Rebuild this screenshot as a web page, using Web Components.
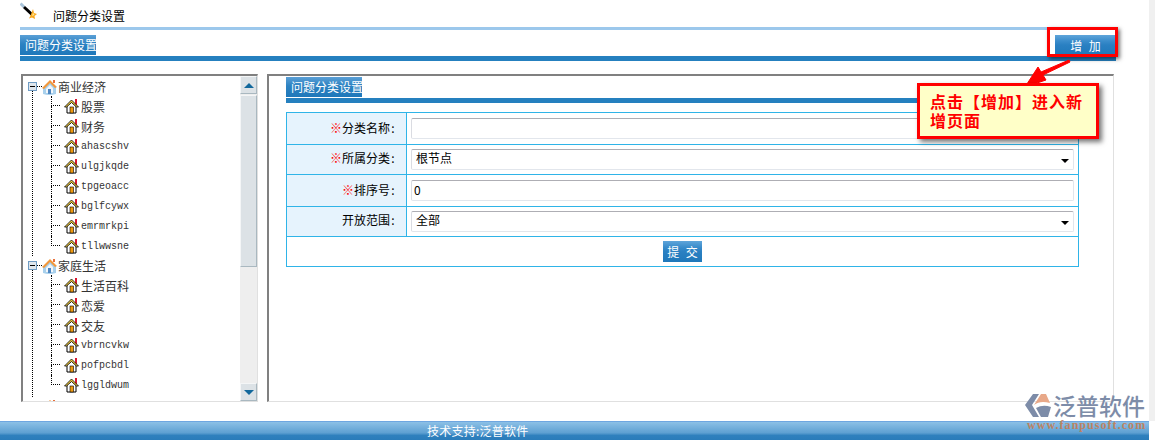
<!DOCTYPE html>
<html lang="zh">
<head>
<meta charset="utf-8">
<title>问题分类设置</title>
<style>
    html, body { margin: 0; height: 440px; overflow: hidden; background: #fff; }
    body { font: 12px "Noto Sans CJK SC", sans-serif; color: #000; }
</style>
</head>
<body>
<app-page>
    <top-title slot="top">问题分类设置</top-title>
    <section-head slot="top" title="问题分类设置" line="top"><blue-button label="增 加" wide></blue-button></section-head>

    <tree-panel slot="left">
        <tree-root label="商业经济">
            <tree-leaf>股票</tree-leaf>
            <tree-leaf>财务</tree-leaf>
            <tree-leaf latin>ahascshv</tree-leaf>
            <tree-leaf latin>ulgjkqde</tree-leaf>
            <tree-leaf latin>tpgeoacc</tree-leaf>
            <tree-leaf latin>bglfcywx</tree-leaf>
            <tree-leaf latin>emrmrkpi</tree-leaf>
            <tree-leaf latin>tllwwsne</tree-leaf>
        </tree-root>
        <tree-root label="家庭生活" style="--kids-end: 2px">
            <tree-leaf>生活百科</tree-leaf>
            <tree-leaf>恋爱</tree-leaf>
            <tree-leaf>交友</tree-leaf>
            <tree-leaf latin>vbrncvkw</tree-leaf>
            <tree-leaf latin>pofpcbdl</tree-leaf>
            <tree-leaf latin>lggldwum</tree-leaf>
        </tree-root>
        <tree-root label="休闲娱乐"></tree-root>
    </tree-panel>

    <form-panel slot="right">
        <section-head title="问题分类设置"></section-head>
        <form-table>
            <form-row label="分类名称" required height="31"></form-row>
            <form-row label="所属分类" required select height="29">根节点</form-row>
            <form-row label="排序号" required height="31">0</form-row>
            <form-row label="开放范围" select height="29">全部</form-row>
            <submit-row><blue-button label="提 交"></blue-button></submit-row>
        </form-table>
    </form-panel>

    <site-footer slot="bottom">技术支持:泛普软件</site-footer>
    <note-callout slot="over">点击【增加】进入新增页面</note-callout>
    <site-logo slot="over"></site-logo>
</app-page>

<script>
class AppPage extends HTMLElement{
    constructor() {
        super();
        this.attachShadow({mode: "open"});
    }
    connectedCallback(){
        this.shadowRoot.innerHTML = `
        <style>
            :host { display: flex; position: relative; width: 1155px; height: 440px; overflow: hidden; }
            .col { width: 1149px; display: flex; flex-direction: column; }
            .gutter { flex: 1; height: 421px; background: #f0f0f0; }
            .top { padding: 0 33px 0 20px; display: block; }
            .main { display: flex; gap: 9px; margin: 13px 0 0 21px; height: 328px; width: 1093px; }
            .spacer { flex: 1; }
        </style>
        <div class="col">
            <div class="top"><slot name="top"></slot></div>
            <div class="main"><slot name="left"></slot><slot name="right"></slot></div>
            <div class="spacer"></div>
            <slot name="bottom"></slot>
        </div>
        <div class="gutter"></div>
        <slot name="over"></slot>
        `;
    }
}

class TopTitle extends HTMLElement{
    constructor() {
        super();
        this.attachShadow({mode: "open"});
    }
    connectedCallback(){
        this.shadowRoot.innerHTML = `
        <style>
            :host { display: block; height: 30px; box-sizing: border-box; border-bottom: 3px solid #9cc8ec; }
            .row { display: flex; align-items: center; height: 27px; }
            svg { width: 17px; height: 17px; margin: -6px 16px 0 0; }
            span { font-size: 12px; padding-top: 5px; line-height: 22px; }
        </style>
        <div class="row">
            <svg viewBox="0 0 17 17">
                <path d="M0.5 1.5 L4 5" stroke="#a9c4da" stroke-width="3"/>
                <path d="M4 5 L12 12.5" stroke="#000" stroke-width="3"/>
                <path d="M13 7 L14 11 L17 12 L14.5 14 L15 17 L12 15.5 L9 16.5 L10.5 13.5 Z" fill="#f8a820"/>
                <path d="M13 10.5 L14.5 13 L12 14 Z" fill="#ffe890"/>
            </svg>
            <span><slot></slot></span>
        </div>
        `;
    }
}

class SectionHead extends HTMLElement{
    constructor() {
        super();
        this.attachShadow({mode: "open"});
    }
    connectedCallback(){
        this.shadowRoot.innerHTML = `
        <style>
            :host { display: block; }
            :host([line]) { margin-top: 5px; }
            .row { display: flex; justify-content: space-between; height: 20px; margin-bottom: 1px; }
            .tab {
                background: linear-gradient(#5a9fd6 0, #2c82c2 45%, #1f78ba 100%);
                color: #fff; font-size: 12px; line-height: 20px; padding-left: 5px; width: 71px; white-space: nowrap;
            }
            .bar { height: 5px; background: #2580bf; }
        </style>
        <div class="row"><div class="tab">${this.getAttribute("title")}</div><slot></slot></div>
        <div class="bar"></div>
        `;
    }
}

class BlueButton extends HTMLElement{
    constructor() {
        super();
        this.attachShadow({mode: "open"});
    }
    connectedCallback(){
        this.shadowRoot.innerHTML = `
        <style>
            :host { display: block; width: 39px; height: 21px; }
            :host([wide]) { width: 61px; height: 20px; }
            div {
                height: 100%; color: #fff; font-size: 12px; word-spacing: 4px; text-align: center;
                display: flex; align-items: center; justify-content: center;
                background: linear-gradient(#5fa5da 0, #3a8ccb 30%, #2a80c2 50%, #1f78ba 100%);
            }
        </style>
        <div>${this.getAttribute("label")}</div>
        `;
    }
}

class TreePanel extends HTMLElement{
    constructor() {
        super();
        this.attachShadow({mode: "open"});
    }
    connectedCallback(){
        this.shadowRoot.innerHTML = `
        <style>
            :host {
                display: flex; width: 237px; height: 328px; box-sizing: border-box;
                border-top: 2px solid #808080; border-left: 2px solid #808080;
                border-right: 1px solid #e0e0e0; border-bottom: 1px solid #e0e0e0;
            }
            .list { flex: 1; overflow: hidden; padding: 1px 0 0 5px; }
            .bar { width: 17px; display: flex; flex-direction: column; background: #eeeeee; }
            .btn, .thumb { box-sizing: border-box; background: #dce2e6; border: 1px solid #a9b8c0; border-top-color: #f4f6f7; border-left-color: #f4f6f7; }
            .btn { height: 18px; display: flex; align-items: center; justify-content: center; }
            .thumb { height: 172px; margin-top: 1px; }
            .track { flex: 1; }
            i { width: 0; height: 0; border-left: 5px solid transparent; border-right: 5px solid transparent; }
            .up { border-bottom: 5px solid #12689c; }
            .down { border-top: 5px solid #12689c; }
        </style>
        <div class="list"><slot></slot></div>
        <div class="bar">
            <div class="btn"><i class="up"></i></div>
            <div class="thumb"></div>
            <div class="track"></div>
            <div class="btn"><i class="down"></i></div>
        </div>
        `;
    }
}

class TreeRoot extends HTMLElement{
    constructor() {
        super();
        this.attachShadow({mode: "open"});
    }
    connectedCallback(){
        this.shadowRoot.innerHTML = `
        <style>
            :host { display: block; }
            .row { display: flex; align-items: center; height: 19px; color: #333; font-size: 12px; }
            .box {
                box-sizing: border-box; width: 9px; height: 9px; border: 1px solid #6f9cc4; background: #dfe6ec;
                display: flex; align-items: center; justify-content: center;
            }
            .box b { width: 5px; height: 1px; background: #000; }
            .dash { width: 5px; border-top: 1px dotted #000; }
            svg { width: 15px; height: 16px; margin-right: 1px; }
            .kids {
                margin: -5px 0 0 4px; padding: 5px 0 var(--kids-end, 0) 18px;
                border-left: 1px dotted #000;
            }
        </style>
        <div class="row">
            <span class="box"><b></b></span><span class="dash"></span>
            <svg viewBox="0 0 15 16">
                <path d="M1 9 L1 15 Q7 17 14 15 L14 8 L8 3 Z" fill="#a8d0ec"/>
                <path d="M4 10 L4 14 L11 14 L11 9 L8 6 Z" fill="#f2f6fa"/>
                <rect x="6" y="10" width="3" height="5" fill="#4f86c0"/>
                <path d="M0 9 L8 1 L15 8 L13 9 L8 4 L2 10 Z" fill="#f2983c"/>
                <rect x="11" y="1" width="2" height="3" fill="#e8703c"/>
            </svg>
            <span>${this.getAttribute("label")}</span>
        </div>
        <div class="kids"><slot></slot></div>
        `;
    }
}

class TreeLeaf extends HTMLElement{
    constructor() {
        super();
        this.attachShadow({mode: "open"});
    }
    connectedCallback(){
        this.shadowRoot.innerHTML = `
        <style>
            :host { display: flex; align-items: center; height: 20px; color: #333; font-size: 12px; white-space: nowrap; }
            :host([latin]) { font-family: "Liberation Mono", monospace; font-size: 10px; }
            .line { width: 9px; height: 20px; margin-right: 4px; }
            .line i, .line b { display: block; box-sizing: border-box; height: 10px; border-left: 1px dotted #000; }
            .line i { border-bottom: 1px dotted #000; }
            :host(:last-child) .line b { border-left: 0; }
            svg { width: 15px; height: 15px; margin-right: 2px; }
        </style>
        <span class="line"><i></i><b></b></span>
        <svg viewBox="0 0 15 15">
            <rect x="11" y="0" width="2" height="6" fill="#d81830"/>
            <path d="M3 7 L3 14 L12 14 L12 7 L7.5 3 Z" fill="#fff" stroke="#000"/>
            <path d="M0.5 8 L7.5 1 L14.5 8 L12.5 8 L7.5 3.5 L2.5 8 Z" fill="#f6d040" stroke="#000" stroke-width="0.8"/>
            <rect x="6" y="8" width="3.5" height="6" fill="#f09a10" stroke="#000" stroke-width="0.6"/>
        </svg>
        <slot></slot>
        `;
    }
}

class FormPanel extends HTMLElement{
    constructor() {
        super();
        this.attachShadow({mode: "open"});
    }
    connectedCallback(){
        this.shadowRoot.innerHTML = `
        <style>
            :host {
                display: block; width: 847px; height: 328px; box-sizing: border-box;
                border-top: 2px solid #808080; border-left: 2px solid #808080;
                border-right: 1px solid #e0e0e0; border-bottom: 1px solid #e0e0e0;
                padding: 1px 34px 0 17px;
            }
        </style>
        <slot></slot>
        `;
    }
}

class FormTable extends HTMLElement{
    constructor() {
        super();
        this.attachShadow({mode: "open"});
    }
    connectedCallback(){
        this.shadowRoot.innerHTML = `
        <style>
            :host { display: block; margin-top: 9px; border: 1px solid #2fb4e8; border-bottom: 0; }
        </style>
        <slot></slot>
        `;
    }
}

class FormRow extends HTMLElement{
    constructor() {
        super();
        this.attachShadow({mode: "open"});
    }
    connectedCallback(){
        const mark = this.hasAttribute("required") ? `<em>※</em>` : "";
        const arrow = this.hasAttribute("select") ? `<i></i>` : "";
        this.shadowRoot.innerHTML = `
        <style>
            :host {
                display: grid; grid-template-columns: 120px 1fr; height: ${this.getAttribute("height")}px;
                border-bottom: 1px solid #2fb4e8; font-size: 12px;
            }
            .label {
                background: #e6f3fd; border-right: 1px solid #2fb4e8; display: flex; align-items: center;
                justify-content: flex-end; padding: 0 10px 2px 0; white-space: nowrap;
            }
            :host([select]) .label { padding-bottom: 4px; }
            em { color: #f00; font-style: normal; font-weight: 700; }
            .colon { width: 6px; text-align: center; }
            .cell { display: flex; align-items: center; padding: 0 4px; }
            .field {
                flex: 1; box-sizing: border-box; height: 21px; border: 1px solid #e2e6ec; border-top-color: #aeaeb4;
                border-left-color: #dadce2; border-radius: 2px; display: flex; align-items: center;
                justify-content: space-between; padding: 0 4px 2px 2px; font-size: 12px;
            }
            :host([select]) .field { padding: 0 4px 4px 4px; }
            i { width: 0; height: 0; margin-top: 6px; border-left: 4px solid transparent; border-right: 4px solid transparent; border-top: 4px solid #000; }
        </style>
        <div class="label">${mark}<span>${this.getAttribute("label")}</span><span class="colon">:</span></div>
        <div class="cell"><div class="field"><span><slot></slot></span>${arrow}</div></div>
        `;
    }
}

class SubmitRow extends HTMLElement{
    constructor() {
        super();
        this.attachShadow({mode: "open"});
    }
    connectedCallback(){
        this.shadowRoot.innerHTML = `
        <style>
            :host { display: flex; justify-content: center; align-items: center; height: 29px; border-bottom: 1px solid #2fb4e8; }
        </style>
        <slot></slot>
        `;
    }
}

class SiteFooter extends HTMLElement{
    constructor() {
        super();
        this.attachShadow({mode: "open"});
    }
    connectedCallback(){
        this.shadowRoot.innerHTML = `
        <style>
            :host {
                display: block; height: 19px; box-sizing: border-box; border-top: 1px solid #6ea6e0;
                background: linear-gradient(#8cc0e6 0, #5ea0d2 60%, #2f80bd 75%, #2a7cba 100%);
                color: #fff; font-size: 12px; line-height: 17px; padding-left: 427px; letter-spacing: .25px;
            }
        </style>
        <slot></slot>
        `;
    }
}

class NoteCallout extends HTMLElement{
    constructor() {
        super();
        this.attachShadow({mode: "open"});
    }
    connectedCallback(){
        this.shadowRoot.innerHTML = `
        <style>
            :host { display: block; position: absolute; left: 0; top: 0; width: 0; height: 0; }
            .mark {
                position: absolute; left: 1047px; top: 27px; width: 71px; height: 30px; box-sizing: border-box;
                border: 3px solid #f00; box-shadow: 2px 2px 4px rgba(0,0,0,.55);
            }
            svg { position: absolute; left: 1020px; top: 58px; width: 56px; height: 34px; overflow: visible; }
            .note {
                position: absolute; left: 917px; top: 83px; width: 182px; height: 56px; box-sizing: border-box;
                border: 3px solid #f00; background: #ffffc8; box-shadow: 3px 3px 5px rgba(0,0,0,.55);
                color: #f00; font-size: 16px; font-weight: 700; line-height: 19px; letter-spacing: 1px;
                padding: 6px 7px 0 10px;
            }
        </style>
        <div class="mark"></div>
        <svg viewBox="0 0 56 34">
            <path d="M50 4 L23 17 L26 22 L5 29 L18 9 L21 14 L49 2 Z" fill="#f00" stroke="#f00" stroke-width="1"/>
        </svg>
        <div class="note"><slot></slot></div>
        `;
    }
}

class SiteLogo extends HTMLElement{
    constructor() {
        super();
        this.attachShadow({mode: "open"});
    }
    connectedCallback(){
        this.shadowRoot.innerHTML = `
        <style>
            :host { display: block; position: absolute; left: 1025px; top: 392px; width: 124px; }
            .top { display: flex; align-items: center; height: 27px; }
            svg { width: 26px; height: 25px; margin-right: 2px; flex: none; }
            .name { font-size: 23px; font-weight: 500; line-height: 27px; color: #7d8ca8; white-space: nowrap; }
            .url {
                font: 700 12px "Liberation Serif", serif; color: #bc8262; letter-spacing: 1.05px;
                white-space: nowrap; line-height: 12px; margin-left: 2px;
            }
        </style>
        <div class="top">
            <svg viewBox="0 0 26 25">
                <path d="M8 1 L0 12 L8 24 L14 24 L7 12 L14 1 Z" fill="#7d8ca8"/>
                <path d="M16 1 L9 12 Q15 7 25 10 L21 1 Z" fill="#e8a888"/>
                <path d="M16 24 L23 24 L26 14 Q18 11 11 15 Z" fill="#7d8ca8"/>
            </svg>
            <div class="name">泛普软件</div>
        </div>
        <div class="url">www.fanpusoft.com</div>
        `;
    }
}

customElements.define('app-page', AppPage);
customElements.define('top-title', TopTitle);
customElements.define('section-head', SectionHead);
customElements.define('blue-button', BlueButton);
customElements.define('tree-panel', TreePanel);
customElements.define('tree-root', TreeRoot);
customElements.define('tree-leaf', TreeLeaf);
customElements.define('form-panel', FormPanel);
customElements.define('form-table', FormTable);
customElements.define('form-row', FormRow);
customElements.define('submit-row', SubmitRow);
customElements.define('site-footer', SiteFooter);
customElements.define('note-callout', NoteCallout);
customElements.define('site-logo', SiteLogo);
</script>
</body>
</html>
